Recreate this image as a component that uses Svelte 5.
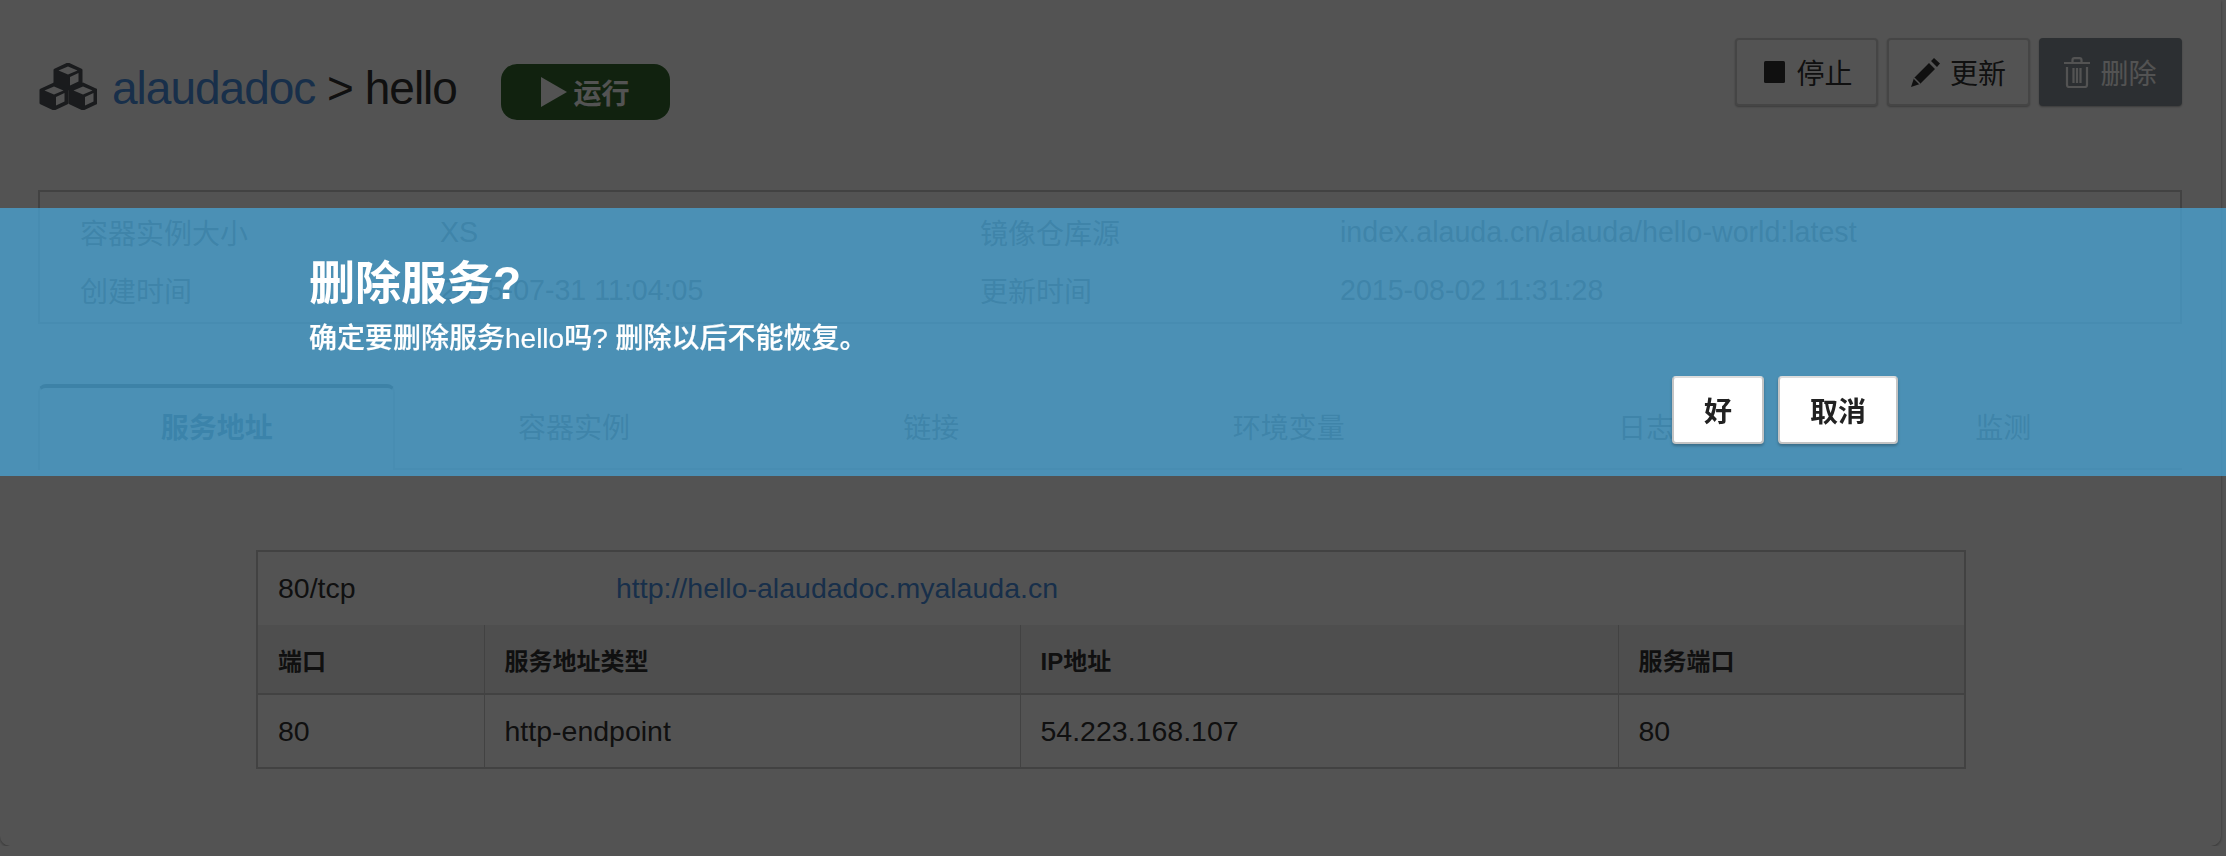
<script>
  const info = [
    ["容器实例大小", "XS", "镜像仓库源", "index.alauda.cn/alauda/hello-world:latest"],
    ["创建时间", "2015-07-31 11:04:05", "更新时间", "2015-08-02 11:31:28"]
  ];

  const tabs = ["服务地址", "容器实例", "链接", "环境变量", "日志", "监测"];

  const columns = ["端口", "服务地址类型", "IP地址", "服务端口"];
  const row = ["80", "http-endpoint", "54.223.168.107", "80"];

  // centres of the three logo cubes
  const cubes = [[29, 13], [15, 33], [44, 33]];
</script>

<div class="page">
  <header class="header">
    <div class="title">
      <svg class="logo" viewBox="0 0 58 47" width="58" height="47">
        {#each cubes as [x, y]}
          <g transform="translate({x} {y})">
            <path d="M0 -12 L13 -6 L13 7 L0 13 L-13 7 L-13 -6 Z" fill="#50555b" stroke="#50555b" stroke-width="3" stroke-linejoin="round" />
            <path d="M0 -9.5 L9.500 -5.500 L0 -1.500 L-9.500 -5.500 Z" fill="#fff" />
            <path d="M2 1 L10.500 -3 L10.500 5.500 L2 9.500 Z" fill="#fff" />
          </g>
        {/each}
      </svg>
      <h1><a href="#top">alaudadoc</a> &gt; hello</h1>
      <span class="badge">
        <svg viewBox="0 0 26 30" width="26" height="30"><path d="M0 0 L26 15 L0 30 Z" fill="#fff" /></svg>
        运行
      </span>
    </div>

    <div class="actions">
      <button class="action stop">
        <svg viewBox="0 0 22 22" width="22" height="22"><rect width="21" height="22" rx="1.5" fill="#333" /></svg>
        停止
      </button>
      <button class="action">
        <svg viewBox="0 0 29 29" width="29" height="29">
          <path d="M0 29 L3 20 L18 5 L24 11 L9 26 Z M20 3 L23 0 L29 5.500 L26 9 Z" fill="#333" />
          <path d="M3 20 L9 26" stroke="#fff" stroke-width="1.500" />
        </svg>
        更新
      </button>
      <button class="action danger">
        <svg viewBox="0 0 26 31" width="26" height="31" fill="none" stroke="#fff" stroke-width="2.200">
          <path d="M0 6 H26 M8.500 6 V3 Q8.500 1.200 10.500 1.200 H15.500 Q17.500 1.200 17.500 3 V6" />
          <path d="M3 10 V28 Q3 30 5 30 H21 Q23 30 23 28 V10 M9.500 11 V26 M13 11 V26 M16.500 11 V26" />
        </svg>
        删除
      </button>
    </div>
  </header>

  <section class="info">
    {#each info as cells}
      {#each cells as cell, i}
        <div class="cell" class:value={i % 2 === 1}>{cell}</div>
      {/each}
    {/each}
  </section>

  <nav class="tabs">
    {#each tabs as tab, i}
      <div class="tab" class:active={i === 0}>{tab}</div>
    {/each}
  </nav>

  <table class="ports">
    <colgroup>
      <col style="width: 227px" />
      <col style="width: 536px" />
      <col style="width: 598px" />
      <col />
    </colgroup>
    <tbody>
      <tr>
        <td colspan="4" class="endpoint"><span class="proto">80/tcp</span><a href="#top">http://hello-alaudadoc.myalauda.cn</a></td>
      </tr>
      <tr>
        {#each columns as col}
          <th>{col}</th>
        {/each}
      </tr>
      <tr>
        {#each row as value}
          <td>{value}</td>
        {/each}
      </tr>
    </tbody>
  </table>
</div>

<div class="overlay"></div>

<div class="dialog">
  <h2>删除服务?</h2>
  <p>确定要删除服务hello吗? 删除以后不能恢复。</p>
  <div class="dialog-buttons">
    <button class="confirm">好</button>
    <button class="confirm">取消</button>
  </div>
</div>

<style>
  :global(body) {
    background: #fff;
    font-family: "Liberation Sans", "Noto Sans CJK SC", sans-serif;
    color: #333;
    overflow: hidden;
  }

  .page {
    box-sizing: border-box;
    width: 2221px;
    height: 846px;
    padding: 38px 39px 0 38px;
    background: #fff;
    border-radius: 0 0 10px 10px;
    box-shadow: 0 1px 3px rgba(0, 0, 0, 0.4);
  }

  .header {
    display: flex;
    justify-content: space-between;
    height: 68px;
    margin-bottom: 84px;
  }

  .title {
    display: flex;
    align-items: flex-start;
    padding-top: 25px;
  }

  .logo {
    margin: 0 15px 0 1px;
  }

  h1 {
    margin: -3px 44px 0 0;
    font-size: 46px;
    line-height: 56px;
    font-weight: 400;
    letter-spacing: -1px;
    color: #333;
  }

  h1 a {
    color: #4a90e2;
    text-decoration: none;
  }

  .badge {
    box-sizing: border-box;
    display: flex;
    align-items: center;
    justify-content: center;
    gap: 6px;
    width: 169px;
    height: 56px;
    margin-top: 1px;
    background: #346a2e;
    border-radius: 16px;
    color: #fff;
    font-size: 28px;
    font-weight: 700;
  }

  .actions {
    display: flex;
    gap: 9px;
  }

  .action {
    box-sizing: border-box;
    display: flex;
    align-items: center;
    justify-content: center;
    gap: 10px;
    width: 143px;
    height: 68px;
    padding: 0;
    background: #fff;
    border: 2px solid #d5d5d5;
    border-radius: 4px;
    box-shadow: 0 1px 2px rgba(0, 0, 0, 0.3);
    font: inherit;
    font-size: 28px;
    color: #333;
  }

  .stop {
    padding-left: 4px;
  }

  .danger {
    background: #889299;
    border-color: #889299;
    color: #fff;
  }

  .info {
    box-sizing: border-box;
    display: grid;
    grid-template-columns: 360px 540px 360px 1fr;
    grid-auto-rows: 58px;
    align-items: center;
    height: 134px;
    padding: 11px 40px;
    border: 2px solid #ccc;
    font-size: 28px;
    color: #777;
  }

  .cell.value {
    font-size: 28.6px;
  }

  .tabs {
    display: grid;
    grid-template-columns: repeat(6, 1fr);
    height: 86px;
    margin-top: 60px;
  }

  .tab {
    box-sizing: border-box;
    display: flex;
    align-items: center;
    justify-content: center;
    border-bottom: 2px solid #ddd;
    font-size: 28px;
    color: #777;
  }

  .tab.active {
    border: 2px solid #ddd;
    border-top: 4px solid #666;
    border-bottom: none;
    border-radius: 8px 8px 0 0;
    font-weight: 700;
    color: #4f6f86;
    padding-bottom: 6px;
  }

  .ports {
    width: 1710px;
    margin: 80px 0 0 218px;
    border: 2px solid #ccc;
    border-collapse: collapse;
    table-layout: fixed;
    font-size: 28.5px;
  }

  .ports th,
  .ports td {
    box-sizing: border-box;
    padding: 0 20px;
    border: 1px solid #ccc;
    text-align: left;
  }

  .ports th {
    height: 69px;
    background: #eee;
    border-top: none;
    border-bottom-width: 2px;
    font-size: 24px;
    color: #333;
  }

  .ports td {
    height: 74px;
  }

  .ports .endpoint {
    border-bottom: none;
    white-space: nowrap;
  }

  .endpoint .proto {
    display: inline-block;
    width: 338px;
  }

  .endpoint a {
    color: #4a90e2;
    text-decoration: none;
  }

  .overlay {
    position: fixed;
    inset: 0;
    background: rgba(0, 0, 0, 0.675);
  }

  .dialog {
    position: fixed;
    top: 208px;
    left: 0;
    right: 0;
    box-sizing: border-box;
    height: 268px;
    padding: 48px 328px 0 309px;
    background: rgba(72, 168, 219, 0.72);
    color: #fff;
  }

  h2 {
    margin: 0;
    font-size: 46px;
    line-height: 54px;
    font-weight: 700;
  }

  p {
    margin: 11px 0 0;
    font-size: 28px;
    line-height: 36px;
    font-weight: 500;
    -webkit-text-stroke: 0.2px #fff;
  }

  .dialog-buttons {
    display: flex;
    justify-content: flex-end;
    gap: 14px;
    margin-top: 19px;
  }

  .confirm {
    box-sizing: border-box;
    height: 68px;
    padding: 0 30px;
    background: #fff;
    border: 2px solid #c4c4c4;
    border-top-color: #ddd;
    border-radius: 4px;
    box-shadow: 0 2px 3px rgba(0, 0, 0, 0.25);
    font: inherit;
    font-size: 28px;
    font-weight: 700;
    color: #222;
  }
</style>
